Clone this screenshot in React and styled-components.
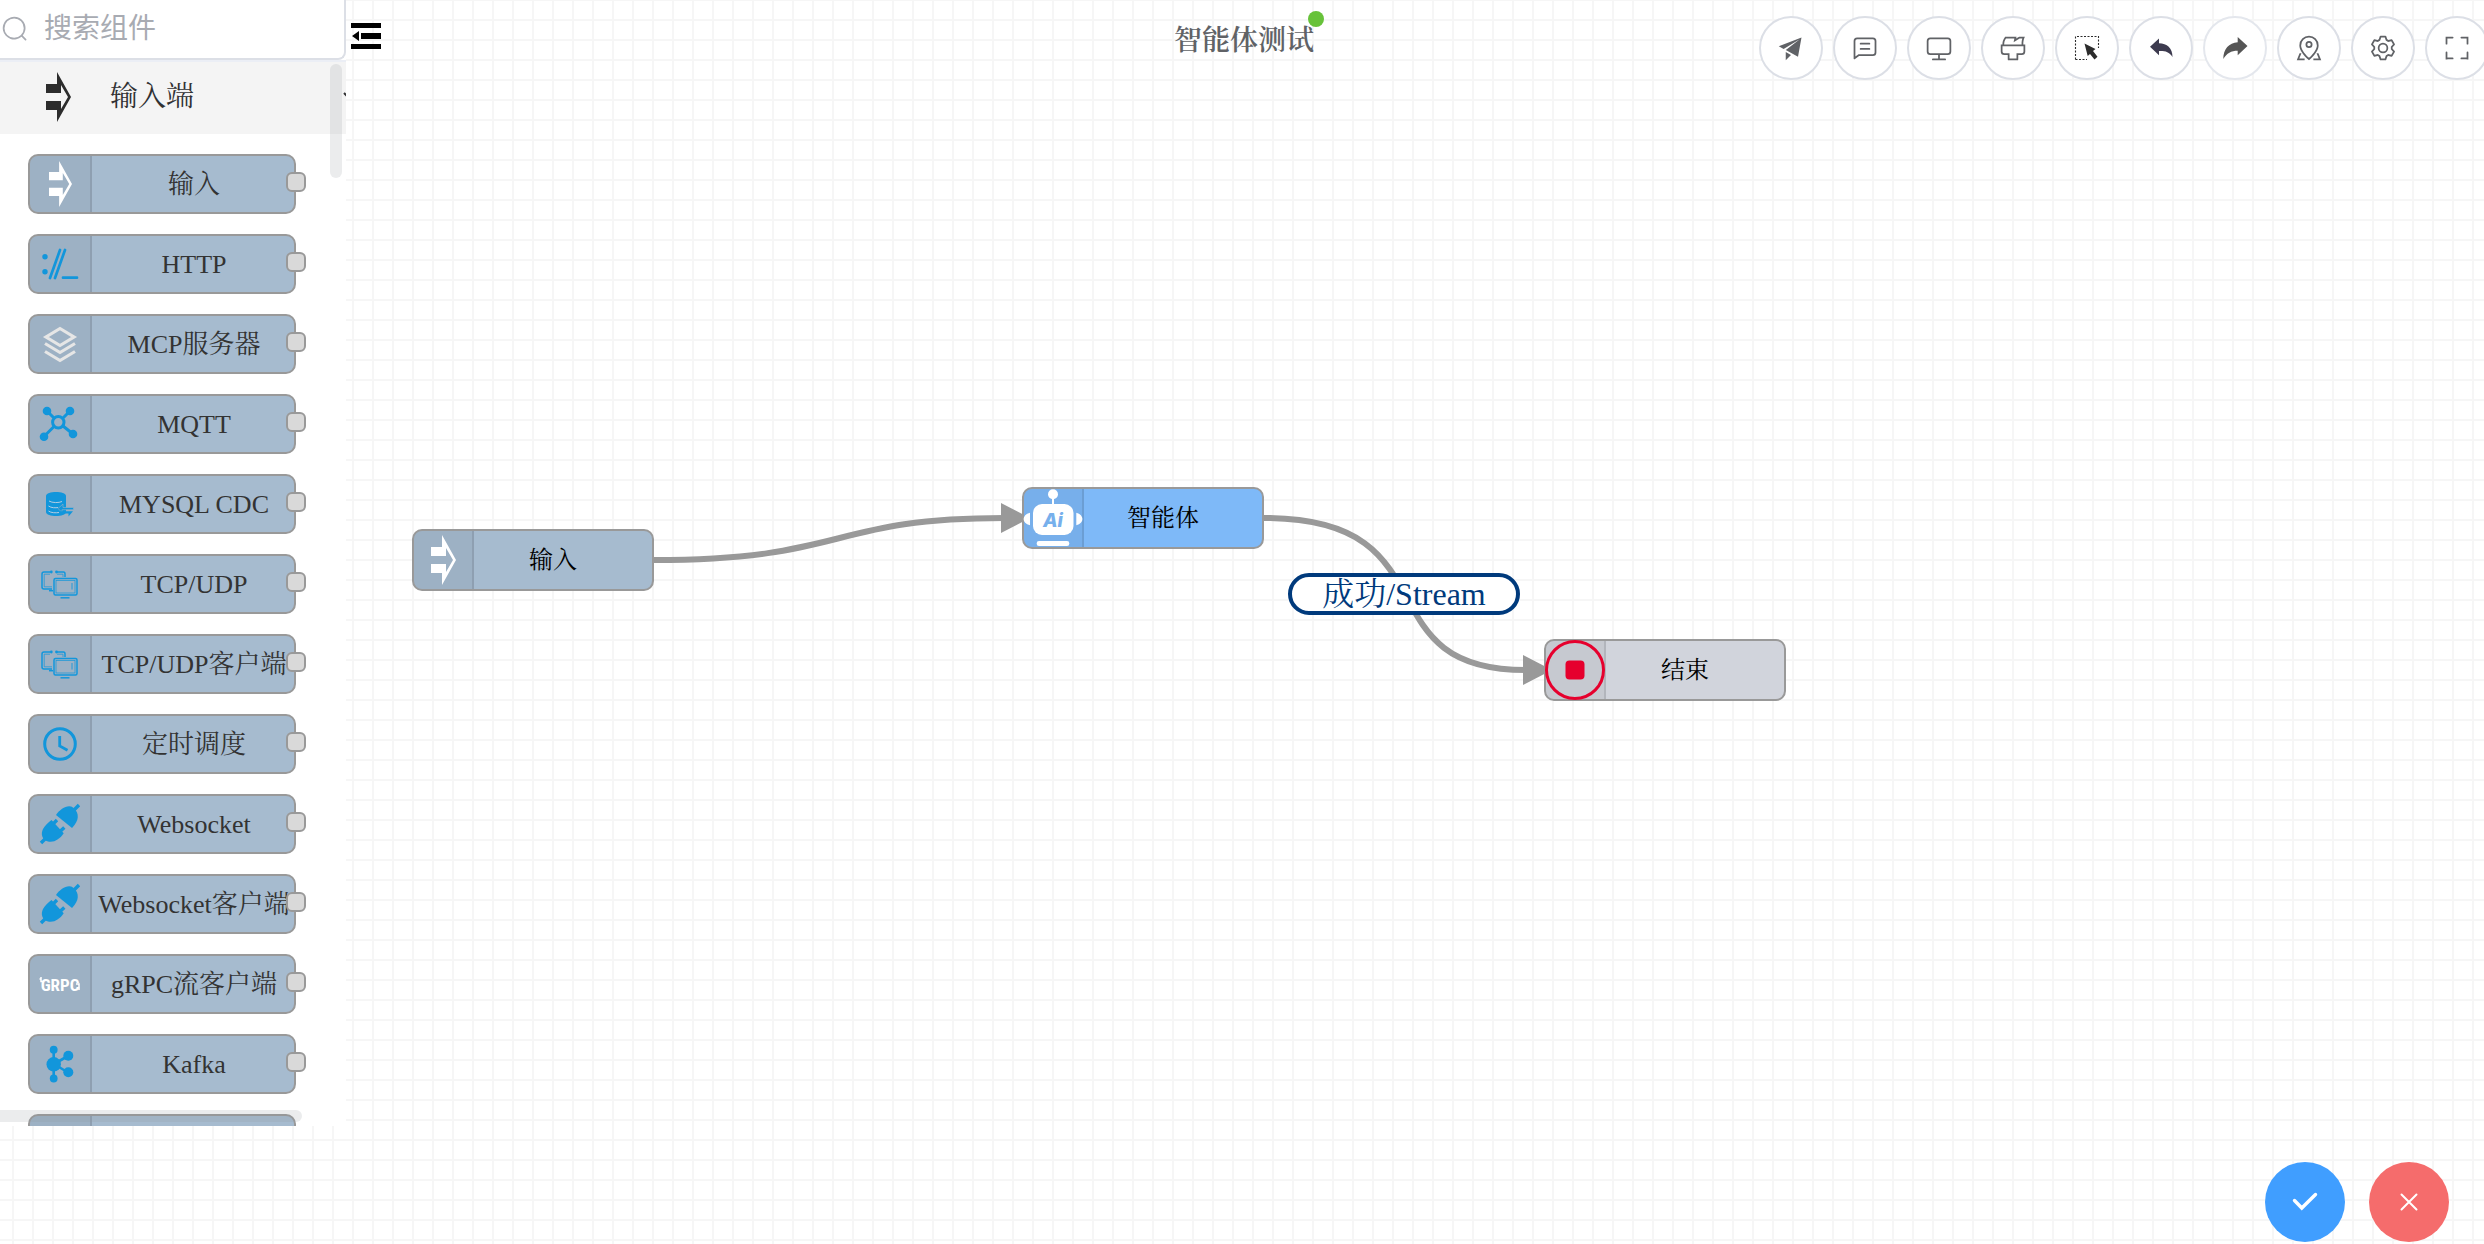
import React from "react";
import styled, { createGlobalStyle } from "styled-components";

const serif = `"Liberation Serif", "Noto Serif CJK SC", "Noto Sans CJK SC", serif`;
const sans = `"Liberation Sans", "Noto Sans CJK SC", sans-serif`;
const BLUE = "#1296db";

const GlobalStyle = createGlobalStyle`
  *, *::before, *::after { box-sizing: border-box; }
  body { margin: 0; background: #fff; font-family: ${serif}; }
  button { font: inherit; padding: 0; cursor: pointer; }
  svg { display: block; }
`;

const Page = styled.div`
  position: relative;
  display: grid;
  grid-template-columns: 346px 1fr;
  grid-template-rows: auto 1fr auto;
  min-height: 100vh;
  overflow: hidden;
  background-color: #fff;
  background-image:
    linear-gradient(to right, #f6f6f6 2px, transparent 2px),
    linear-gradient(to bottom, #f6f6f6 2px, transparent 2px);
  background-size: 20px 20px;
  background-position: 12px 0, 0 -1px;
`;

/* ---------- palette ---------- */

const Palette = styled.aside`
  grid-column: 1;
  grid-row: 1 / -1;
  z-index: 2;
  position: relative;
  height: calc(100vh - 118px);
  overflow: hidden;
  background: #fff;
`;

const SearchBox = styled.label`
  display: flex;
  align-items: center;
  gap: 15px;
  height: 60px;
  padding-left: 1px;
  color: #a8abb2;
  border-right: 2px solid #dcdfe6;
  border-bottom: 2px solid #dcdfe6;
  border-bottom-right-radius: 8px;
`;

const SearchInput = styled.input`
  flex: 1;
  min-width: 0;
  padding: 0;
  border: 0;
  outline: 0;
  background: none;
  font: 28px/40px ${sans};
  color: #606266;
  &::placeholder { color: #a8abb2; opacity: 1; }
`;

const GroupHeader = styled.button`
  display: flex;
  align-items: center;
  gap: 39px;
  width: 100%;
  height: 74px;
  padding: 0 0 2px 46px;
  border: 0;
  border-top: 2px solid #ebeef5;
  background: #f4f4f4;
  color: #303133;
  font-size: 28px;
  line-height: 40px;
`;

const Chevron = styled.svg`
  position: absolute;
  left: 343px;
  top: 90px;
`;

const PaletteList = styled.ul`
  display: flex;
  flex-direction: column;
  gap: 20px;
  margin: 0;
  padding: 20px 50px 20px 28px;
  list-style: none;
`;

const PaletteItem = styled.li`
  position: relative;
  display: flex;
  height: 60px;
  border: 2px solid #999;
  border-radius: 10px;
  background: #a6bbcf;
  color: #333;
  cursor: grab;
`;

const IconCell = styled.span`
  display: flex;
  align-items: center;
  justify-content: center;
  flex: none;
  width: ${(p) => p.$width}px;
  border-right: 2px solid rgba(0, 0, 0, 0.1);
  border-radius: 8px 0 0 8px;
  background: rgba(0, 0, 0, 0.05);
`;

const ItemLabel = styled.span`
  flex: 1;
  padding-left: 2px;
  font-size: 26px;
  line-height: 58px;
  text-align: center;
  white-space: nowrap;
`;

const Port = styled.span`
  position: absolute;
  right: -12px;
  top: 16px;
  width: 20px;
  height: 20px;
  border: 2px solid #999;
  border-radius: 6px;
  background: #d9d9d9;
`;

const Thumb = styled.div`
  position: absolute;
  border-radius: 6px;
  background: rgba(144, 147, 153, 0.18);
`;
const VerticalThumb = styled(Thumb)`
  top: 64px;
  right: 4px;
  width: 12px;
  height: 114px;
`;
const HorizontalThumb = styled(Thumb)`
  left: -6px;
  bottom: 4px;
  width: 308px;
  height: 12px;
`;

/* ---------- header ---------- */

const Header = styled.header`
  grid-column: 1 / -1;
  grid-row: 1;
  z-index: 1;
  display: grid;
  grid-template-columns: 1fr auto 1fr;
  align-items: start;
`;

const CollapseButton = styled.button`
  justify-self: start;
  margin: 23px 0 0 351px;
  border: 0;
  background: none;
`;

const Title = styled.h1`
  position: relative;
  margin: 0;
  padding: 21px 0 0 4px;
  color: #606266;
  font-size: 28px;
  font-weight: 600;
  line-height: 40px;
`;

const StatusDot = styled.span`
  position: absolute;
  top: 11px;
  right: -10px;
  width: 16px;
  height: 16px;
  border-radius: 50%;
  background: #67c23a;
`;

const Toolbar = styled.nav`
  justify-self: end;
  display: flex;
  gap: 10px;
  margin: 16px -5px 0 0;
`;

const ToolButton = styled.button`
  display: flex;
  align-items: center;
  justify-content: center;
  width: 64px;
  height: 64px;
  border: 2px solid ${(p) => (p.disabled ? "#e4e7ed" : "#dcdfe6")};
  border-radius: 50%;
  background: #fff;
  color: #606266;
`;

/* ---------- canvas ---------- */

const Edges = styled.svg`
  position: absolute;
  left: 0;
  top: 0;
  overflow: visible;
`;

const FlowNode = styled.div`
  position: absolute;
  left: ${(p) => p.$x}px;
  top: ${(p) => p.$y}px;
  display: flex;
  width: 242px;
  height: 62px;
  border: 2px solid #999;
  border-radius: 10px;
  background: ${(p) => p.$fill};
  color: #000;
`;

const NodeLabel = styled.span`
  flex: 1;
  padding-right: 20px;
  font-size: 24px;
  line-height: 58px;
  text-align: center;
`;

const EdgeLabel = styled.div`
  position: absolute;
  left: 1288px;
  top: 573px;
  width: 232px;
  height: 42px;
  border: 4px solid #003a7c;
  border-radius: 21px;
  background: #fff;
  color: #003a7c;
  font-size: 32px;
  line-height: 34px;
  text-align: center;
  white-space: nowrap;
`;

const Actions = styled.footer`
  grid-column: 2;
  grid-row: 3;
  z-index: 1;
  display: flex;
  justify-content: flex-end;
  gap: 24px;
  padding: 0 35px 2px 0;
`;

const ActionButton = styled.button`
  display: flex;
  align-items: center;
  justify-content: center;
  width: 80px;
  height: 80px;
  border: 0;
  border-radius: 50%;
  background: ${(p) => p.$fill};
`;

/* ---------- icons ---------- */

const InputArrow = ({ color, width = 25, height = 50 }) => (
  <svg width={width} height={height} viewBox="0 0 25 50" preserveAspectRatio="none" fill={color}>
    <path d="M11 0 25 25 11 50V38H0V29H15V37L22 25 15 13V21H0V12H11Z" />
  </svg>
);

const Cell = ({ children }) => (
  <svg width="60" height="56" viewBox="0 0 60 56" fill="none" overflow="visible">
    {children}
  </svg>
);

const HttpIcon = () => (
  <Cell>
    <g fill={BLUE}>
      <circle cx="15" cy="20.7" r="2.7" />
      <circle cx="15" cy="35.7" r="2.7" />
    </g>
    <path d="M30 14 20 42M35 14 25 42M33 41.7H47" stroke={BLUE} strokeWidth="2.7" strokeLinecap="round" />
  </Cell>
);

const LayersIcon = () => (
  <Cell>
    <path
      d="M30 12.5 44 21 30 29.5 16 21ZM15 27.5 30 36.5 45 27.5M15 35.5 30 44.5 45 35.5"
      stroke="#e6e6e6"
      strokeWidth="3.2"
    />
  </Cell>
);

const MqttIcon = () => (
  <Cell>
    <path d="M17 15 24 22M40 15 33 22M14 40.5 24 30.5M43 38 33 30" stroke={BLUE} strokeWidth="3" />
    <circle cx="28.3" cy="26.3" r="5.7" stroke={BLUE} strokeWidth="3" />
    <g fill={BLUE}>
      <circle cx="17" cy="15" r="4.3" />
      <circle cx="40" cy="15" r="4.3" />
      <circle cx="14" cy="40.7" r="4.3" />
      <circle cx="43" cy="38" r="4.3" />
    </g>
  </Cell>
);

const MysqlIcon = () => (
  <Cell>
    <path d="M16 20C16 14.7 36 14.7 36 20V36C36 41.3 16 41.3 16 36Z" fill={BLUE} />
    <path
      d="M19 25C22 27 29 27 32 25.5M18.500 30C21 32 26 32 28 31.5M18.500 35C21 37 26 37 29 36.5"
      stroke="#c3d3e3"
      strokeWidth="0.9"
    />
    <path d="M28 32.5 33 28V31.5H43.5V33.7H32V36.5Z" fill={BLUE} stroke="#9eb2c5" strokeWidth="0.6" />
    <path d="M29 35.3H43L38.5 40.5V37.5H29Z" fill={BLUE} />
  </Cell>
);

const MonitorsIcon = () => (
  <Cell>
    <g stroke={BLUE}>
      <path d="M20 16H14Q12 16 12 18V31Q12 33 14 33H22M27 16H33.5Q35 16 35 18V21" strokeWidth="1.5" />
      <path d="M20 18.2H14.2V30.8H22M27 18.2H33V21" strokeWidth="0.7" />
      <path d="M19 34.7H23" strokeWidth="1.5" />
      <rect x="24" y="22.5" width="23" height="16.5" rx="1.5" strokeWidth="1.5" />
      <rect x="26" y="24.5" width="19" height="12.5" strokeWidth="0.7" />
      <path d="M42 27V33.5" strokeWidth="0.9" />
      <path d="M30.5 41.8H39.5" strokeWidth="1.5" />
    </g>
    <g fill={BLUE}>
      <circle cx="21.3" cy="16" r="1.4" />
      <circle cx="26.5" cy="16" r="1.4" />
    </g>
  </Cell>
);

const ClockIcon = () => (
  <Cell>
    <circle cx="30" cy="28" r="15.3" stroke={BLUE} strokeWidth="3" />
    <path d="M29.7 20V30L37.5 34.2" stroke={BLUE} strokeWidth="2.8" />
  </Cell>
);

const PlugIcon = () => (
  <Cell>
    <g fill={BLUE}>
      <path d="M26 19C30 13 38 8 43 11.5C50 17 49 25 42 32Z" />
      <path d="M21.5 24 33.7 37.3C30 43 24 47 18 45.5C12 44 10.5 38 13 33C15 29.5 18 26.5 21.5 24Z" />
    </g>
    <path
      d="M44 14 49 9M11 47 16 42M22.5 28.5 27 24M30 35.5 34.3 31.5"
      stroke={BLUE}
      strokeWidth="3.4"
    />
  </Cell>
);

const GrpcIcon = () => (
  <Cell>
    <text
      x="30"
      y="35"
      textAnchor="middle"
      fill="#fff"
      fontFamily="'Roboto Condensed', Roboto, sans-serif"
      fontSize="17"
      fontWeight="700"
    >
      GRPC
    </text>
    <path d="M11 21V25.5H14M11 23H9.5M49 33V28H46M49 30.5V34" stroke="#fff" strokeWidth="1.5" />
  </Cell>
);

const KafkaIcon = () => (
  <Cell>
    <path d="M23.7 14V42M24 28 38 20M24 28 38 36.5" stroke={BLUE} strokeWidth="2.6" />
    <g fill={BLUE}>
      <circle cx="23.7" cy="28.3" r="7.2" />
      <circle cx="23.7" cy="13.7" r="3.9" />
      <circle cx="23.7" cy="42.5" r="3.9" />
      <circle cx="38.3" cy="19.7" r="5" />
      <circle cx="38.3" cy="36.3" r="5" />
    </g>
  </Cell>
);

const RobotIcon = () => (
  <svg width="60" height="58" viewBox="0 0 60 58" overflow="visible" fill="#fff">
    <circle cx="30" cy="5.3" r="5" />
    <path d="M29 9h2v7h-2z" />
    <rect x="10" y="15" width="40.5" height="31" rx="9" />
    <path d="M7 23.7V36.3C-1.5 34 -1.5 26 7 23.7ZM53.3 23.7V36.3C61.5 34 61.5 26 53.3 23.7Z" />
    <rect x="13.7" y="52" width="32.6" height="5" rx="2.3" />
    <text
      x="30"
      y="37.5"
      textAnchor="middle"
      fill="#77b0ec"
      fontFamily="Inter, 'Liberation Sans', sans-serif"
      fontSize="19"
      fontStyle="italic"
      fontWeight="800"
    >
      Ai
    </text>
  </svg>
);

const StopIcon = () => (
  <svg width="60" height="58" viewBox="0 0 60 58" overflow="visible">
    <circle cx="30" cy="29" r="28.5" fill="none" stroke="#e6002d" strokeWidth="3" />
    <rect x="20.5" y="19.5" width="19" height="19" rx="4" fill="#e6002d" />
  </svg>
);

const Glyph = ({ size = 28, paths }) => (
  <svg width={size} height={size} viewBox="0 0 1024 1024" fill="currentColor">
    {paths.map((d) => (
      <path key={d} d={d} />
    ))}
  </svg>
);

const SEARCH = [
  "m795.904 750.72 124.992 124.928a32 32 0 0 1-45.248 45.248L750.656 795.904a416 416 0 1 1 45.248-45.184M480 832a352 352 0 1 0 0-704 352 352 0 0 0 0 704",
];
const SEND = ["m64 448 832-320-128 704-446.08-243.328L832 192 242.816 545.536zm256 512V657.024L512 768z"];
const CHAT = [
  "M160 826.88 273.536 736H800a64 64 0 0 0 64-64V256a64 64 0 0 0-64-64H224a64 64 0 0 0-64 64zM296 800 147.968 918.4A32 32 0 0 1 96 893.44V256a128 128 0 0 1 128-128h576a128 128 0 0 1 128 128v416a128 128 0 0 1-128 128z",
  "M352 512h320q32 0 32 32t-32 32H352q-32 0-32-32t32-32m0-192h320q32 0 32 32t-32 32H352q-32 0-32-32t32-32",
];
const MONITOR = [
  "M544 768v128h192a32 32 0 1 1 0 64H288a32 32 0 1 1 0-64h192V768H192A128 128 0 0 1 64 640V256a128 128 0 0 1 128-128h640a128 128 0 0 1 128 128v384a128 128 0 0 1-128 128zM192 192a64 64 0 0 0-64 64v384a64 64 0 0 0 64 64h640a64 64 0 0 0 64-64V256a64 64 0 0 0-64-64z",
];
const BRUSH = [
  "M896 448H128v192a64 64 0 0 0 64 64h192v192h256V704h192a64 64 0 0 0 64-64zm-770.752-64c0-47.552 5.248-90.24 15.552-128 14.72-54.016 42.496-107.392 83.2-160h417.28l-15.36 70.336L736 96h211.2c-24.832 42.88-41.92 96.256-51.2 160a664 664 0 0 0-6.144 128H960v256a128 128 0 0 1-128 128H704v160a32 32 0 0 1-32 32H352a32 32 0 0 1-32-32V768H192A128 128 0 0 1 64 640V384zm64 0h636.544c-2.048-45.824.256-91.584 6.848-137.216 4.48-30.848 10.688-59.776 18.688-86.784h-96.64l-221.12 141.248L561.92 160H256.512c-25.856 37.888-43.776 75.456-53.952 112.832-8.768 32.064-13.248 69.12-13.312 111.168z",
];
const LOCATION = [
  "M800 416a288 288 0 1 0-576 0c0 118.144 94.528 272.128 288 456.576C705.472 688.128 800 534.144 800 416M512 960C277.312 746.688 160 565.312 160 416a352 352 0 0 1 704 0c0 149.312-117.312 330.688-352 544",
  "M512 448a64 64 0 1 0 0-128 64 64 0 0 0 0 128m0 64a128 128 0 1 1 0-256 128 128 0 0 1 0 256",
  "M857.6 704 960 960H672v-64h193.5L788.7 704zM166.4 704 64 960H352v-64H158.5L235.3 704z",
];
const SETTING = [
  "M600.704 64a32 32 0 0 1 30.464 22.208l35.2 109.376c14.784 7.232 28.928 15.36 42.432 24.512l112.384-24.192a32 32 0 0 1 34.432 15.36L944.32 364.8a32 32 0 0 1-4.032 37.504l-77.12 85.12a357 357 0 0 1 0 49.024l77.12 85.248a32 32 0 0 1 4.032 37.504l-88.704 153.6a32 32 0 0 1-34.432 15.296L708.8 803.904c-13.44 9.088-27.648 17.28-42.368 24.512l-35.264 109.376A32 32 0 0 1 600.704 960H423.296a32 32 0 0 1-30.464-22.208L357.696 828.48a352 352 0 0 1-42.56-24.64l-112.32 24.256a32 32 0 0 1-34.432-15.36L79.68 659.2a32 32 0 0 1 4.032-37.504l77.12-85.248a357 357 0 0 1 0-48.896l-77.12-85.248A32 32 0 0 1 79.68 364.8l88.704-153.6a32 32 0 0 1 34.432-15.296l112.32 24.256c13.568-9.152 27.776-17.408 42.56-24.64l35.2-109.312A32 32 0 0 1 423.232 64H600.64zm-23.424 64H446.72l-36.352 113.088-24.512 11.968a294 294 0 0 0-34.816 20.096l-22.656 15.36-116.224-25.088-65.28 113.152 79.68 88.192-1.92 27.136a293 293 0 0 0 0 40.192l1.92 27.136-79.808 88.192 65.344 113.152 116.224-25.024 22.656 15.296a294 294 0 0 0 34.816 20.096l24.512 11.968L446.72 896h130.688l36.48-113.152 24.448-11.904a288 288 0 0 0 34.752-20.096l22.592-15.296 116.288 25.024 65.28-113.152-79.744-88.192 1.92-27.136a293 293 0 0 0 0-40.256l-1.92-27.136 79.808-88.128-65.344-113.152-116.288 24.96-22.592-15.232a288 288 0 0 0-34.752-20.096l-24.448-11.904L577.344 128zM512 320a192 192 0 1 1 0 384 192 192 0 0 1 0-384m0 64a128 128 0 1 0 0 256 128 128 0 0 0 0-256",
];
const FULLSCREEN = [
  "m160 96.064 192 .192a32 32 0 0 1 0 64l-192-.192V352a32 32 0 0 1-64 0V96h64zm0 831.872V928H96V672a32 32 0 1 1 64 0v191.936l192-.192a32 32 0 1 1 0 64zM864 96.064V96h64v256a32 32 0 1 1-64 0V160.064l-192 .192a32 32 0 1 1 0-64zm0 831.872-192-.192a32 32 0 0 1 0-64l192 .192V672a32 32 0 1 1 64 0v256h-64z",
];

const SelectIcon = () => (
  <svg width="28" height="28" viewBox="0 0 28 28" fill="none">
    <path d="M2.5 25.5V2.5H25.5V14M2.5 25.5H14" stroke="#2c2c2c" strokeWidth="1.1" strokeDasharray="2 1.5" />
    <path d="M11.5 9.5 22.5 15 20 17 24.5 22.8 21.5 25.5 17 20 14.7 22Z" fill="#2c2c2c" />
  </svg>
);

const UndoIcon = () => (
  <svg width="28" height="28" viewBox="0 0 28 28" fill="#3d3b4f">
    <path d="M3 12.7 12 4.5V9.3C20 9.5 25.5 14 25.5 23C22 17.5 18 16.8 12 17V21.3Z" />
  </svg>
);

const RedoIcon = () => (
  <svg width="28" height="28" viewBox="0 0 28 28" fill="#555">
    <path d="M26.5 12 16.7 3V8.3C8 9 2.3 15 2.3 25C6 19 10 16.7 16.7 16.7V21.3Z" />
  </svg>
);

/* ---------- data ---------- */

const paletteItems = [
  { label: "输入", icon: <InputArrow color="#fff" width={23} height={46} /> },
  { label: "HTTP", icon: <HttpIcon /> },
  { label: "MCP服务器", icon: <LayersIcon /> },
  { label: "MQTT", icon: <MqttIcon /> },
  { label: "MYSQL CDC", icon: <MysqlIcon /> },
  { label: "TCP/UDP", icon: <MonitorsIcon /> },
  { label: "TCP/UDP客户端", icon: <MonitorsIcon /> },
  { label: "定时调度", icon: <ClockIcon /> },
  { label: "Websocket", icon: <PlugIcon /> },
  { label: "Websocket客户端", icon: <PlugIcon /> },
  { label: "gRPC流客户端", icon: <GrpcIcon /> },
  { label: "Kafka", icon: <KafkaIcon /> },
  { label: "", icon: null },
];

const tools = [
  { name: "发布", icon: <Glyph paths={SEND} /> },
  { name: "消息", icon: <Glyph paths={CHAT} /> },
  { name: "监视", icon: <Glyph paths={MONITOR} /> },
  { name: "清空", icon: <Glyph paths={BRUSH} /> },
  { name: "框选", icon: <SelectIcon /> },
  { name: "撤销", icon: <UndoIcon /> },
  { name: "重做", icon: <RedoIcon />, disabled: true },
  { name: "定位", icon: <Glyph paths={LOCATION} /> },
  { name: "设置", icon: <Glyph paths={SETTING} /> },
  { name: "全屏", icon: <Glyph paths={FULLSCREEN} /> },
];

const nodes = [
  { label: "输入", x: 412, y: 529, fill: "#a6bbcf", icon: <InputArrow color="#fff" /> },
  { label: "智能体", x: 1022, y: 487, fill: "#7eb9f8", icon: <RobotIcon /> },
  { label: "结束", x: 1544, y: 639, fill: "#d1d4dc", icon: <StopIcon /> },
];

export default function App() {
  return (
    <Page>
      <GlobalStyle />
      <Palette>
        <SearchBox>
          <Glyph paths={SEARCH} />
          <SearchInput type="text" placeholder="搜索组件" aria-label="搜索组件" />
        </SearchBox>
        <GroupHeader type="button" aria-expanded="true">
          <InputArrow color="#2c2c2c" />
          输入端
        </GroupHeader>
        <Chevron width="12" height="10" viewBox="0 0 12 10" fill="none" stroke="#303133" strokeWidth="2">
          <path d="M1 3 6 8 11 3" />
        </Chevron>
        <PaletteList>
          {paletteItems.map((item, i) => (
            <PaletteItem key={i}>
              <IconCell $width={62}>{item.icon}</IconCell>
              <ItemLabel>{item.label}</ItemLabel>
              <Port />
            </PaletteItem>
          ))}
        </PaletteList>
        <VerticalThumb />
        <HorizontalThumb />
      </Palette>

      <Header>
        <CollapseButton type="button" aria-label="收起组件栏">
          <svg width="30" height="26" viewBox="0 0 30 26" fill="#000">
            <path d="M0 0H30V5H0ZM10 10H30V16H10ZM0 21H30V26H0ZM1 13 8 8V18Z" />
          </svg>
        </CollapseButton>
        <Title>
          智能体测试
          <StatusDot />
        </Title>
        <Toolbar>
          {tools.map((t) => (
            <ToolButton key={t.name} type="button" aria-label={t.name} disabled={t.disabled}>
              {t.icon}
            </ToolButton>
          ))}
        </Toolbar>
      </Header>

      <Edges width="1" height="1" fill="none" stroke="#999" strokeWidth="6">
        <path d="M654 560C848 560 828 518 1004 518" />
        <path d="M1264 518C1456 518 1360 670 1526 670" />
        <path d="M1001 503 1030 518 1001 533ZM1523 655 1552 670 1523 685Z" fill="#999" stroke="none" />
      </Edges>
      {nodes.map((n) => (
        <FlowNode key={n.label} $x={n.x} $y={n.y} $fill={n.fill}>
          <IconCell $width={60}>{n.icon}</IconCell>
          <NodeLabel>{n.label}</NodeLabel>
        </FlowNode>
      ))}
      <EdgeLabel>成功/Stream</EdgeLabel>

      <Actions>
        <ActionButton type="button" aria-label="确定" $fill="#409eff">
          <svg width="32" height="32" viewBox="0 0 32 32" fill="none" stroke="#fff" strokeWidth="3.4" strokeLinecap="round">
            <path d="M5.5 14.5 12.8 22 26.500 8.5" />
          </svg>
        </ActionButton>
        <ActionButton type="button" aria-label="取消" $fill="#f56c6c">
          <svg width="32" height="32" viewBox="0 0 32 32" fill="none" stroke="#fff" strokeWidth="2" strokeLinecap="round">
            <path d="M8.5 8.5 23.5 23.5M23.5 8.5 8.5 23.5" />
          </svg>
        </ActionButton>
      </Actions>
    </Page>
  );
}
